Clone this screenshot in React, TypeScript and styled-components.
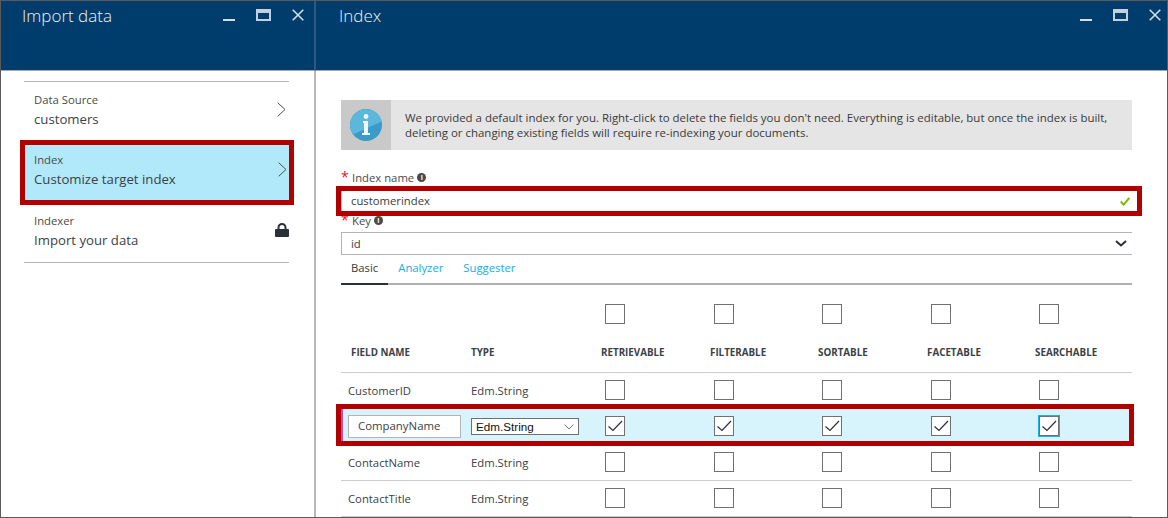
import { createGlobalStyle, styled } from "styled-components";

const GlobalStyle = createGlobalStyle`
  html, body {
    margin: 0;
    padding: 0;
    background: #ffffff;
  }
  * {
    box-sizing: border-box;
  }
`;

const Frame = styled.div`
  display: flex;
  width: 1168px;
  height: 518px;
  overflow: hidden;
  border: 1px solid #5a5a5a;
  font-family: "Open Sans", "Noto Sans", sans-serif;
  color: #3a3a3a;
  background: #ffffff;
`;

const Blade = styled.section<{ $width: string }>`
  display: flex;
  flex-direction: column;
  width: ${(p) => p.$width};
  height: 100%;
`;

const BladeHeader = styled.header<{ $divider?: boolean }>`
  display: flex;
  justify-content: space-between;
  height: 70px;
  flex: none;
  padding: 3px ${(p) => (p.$divider ? "10px" : "6px")} 0 21px;
  background: #003c6c;
  border-bottom: 1px solid #a8a8a8;
  border-right: ${(p) => (p.$divider ? "2px solid #2c5a85" : "none")};
`;

const BladeTitle = styled.h2<{ $indent?: number }>`
  margin: 0 0 0 ${(p) => p.$indent ?? 0}px;
  font-size: 17px;
  font-weight: 300;
  line-height: 24px;
  color: #eef3f7;
`;

const WindowButtons = styled.div`
  display: flex;
  align-items: flex-start;
  gap: 21px;
  padding-top: 5px;
`;

const WindowIcon = styled.svg`
  display: block;
  height: 12px;
  stroke: #d3dee8;
  fill: none;
`;

const Minimize = () => (
  <WindowIcon width="12" viewBox="0 0 12 12">
    <path d="M0 11h12" strokeWidth="2" />
  </WindowIcon>
);

const Maximize = () => (
  <WindowIcon width="15" viewBox="0 0 15 12">
    <path fillRule="evenodd" stroke="none" fill="#c3d1df" d="M0 0h15v12H0zM2 4v6h11V4z" />
  </WindowIcon>
);

const Close = () => (
  <WindowIcon width="12" viewBox="0 0 12 12">
    <path d="M.7.7l10.6 10.6M11.3.7L.7 11.3" strokeWidth="1.6" />
  </WindowIcon>
);

const WindowControls = () => (
  <WindowButtons>
    <Minimize />
    <Maximize />
    <Close />
  </WindowButtons>
);

const StepsPane = styled.div`
  flex: 1;
  padding: 10px 25px 0 23px;
  border-right: 2px solid #b8b8b8;
`;

const StepList = styled.div`
  display: flex;
  flex-direction: column;
  gap: 5px;
  border-top: 1px solid #b4b4b4;
  border-bottom: 1px solid #b4b4b4;
`;

const Step = styled.div<{ $height: number; $top: number; $active?: boolean }>`
  display: flex;
  align-items: flex-start;
  justify-content: space-between;
  height: ${(p) => p.$height}px;
  padding: ${(p) => p.$top}px ${(p) => (p.$active ? "2px 0 9px" : "3px 0 10px")};
  margin: ${(p) => (p.$active ? "0 0 0 1px" : "0")};
  background: ${(p) => (p.$active ? "#b1e9fa" : "transparent")};
  outline: ${(p) => (p.$active ? "5px solid #b00000" : "none")};
`;

const StepText = styled.div`
  display: flex;
  flex-direction: column;
  gap: 2px;
`;

const StepLabel = styled.span`
  font-size: 11.3px;
  line-height: 16px;
  color: #4a4a4a;
`;

const StepValue = styled.span`
  font-size: 13.2px;
  line-height: 18px;
  color: #3a3f48;
`;

const StepIcon = styled.svg<{ $pull?: number }>`
  display: block;
  flex: none;
  margin: 10px -${(p) => p.$pull ?? 0}px 0 0;
`;

const Chevron = () => (
  <StepIcon width="9" height="15" viewBox="0 0 9 15" fill="none" stroke="#4a4f58">
    <path d="M.7.7L8 7.5.7 14.3" />
  </StepIcon>
);

const LockIcon = () => (
  <StepIcon $pull={3} width="14" height="14" viewBox="0 0 14 14">
    <path d="M3.5 7V4.5a3.5 3.5 0 0 1 7 0V7" fill="none" stroke="#2b2f38" strokeWidth="2" />
    <path d="M1 6h12a1 1 0 0 1 1 1v6a1 1 0 0 1-1 1H1a1 1 0 0 1-1-1V7a1 1 0 0 1 1-1z" fill="#2b2f38" />
  </StepIcon>
);

const WorkPane = styled.div`
  flex: 1;
  padding: 29px 35px 0 25px;
`;

const InfoBar = styled.div`
  display: flex;
  align-items: center;
  height: 50px;
  background: #e5e5e5;
`;

const InfoIconBox = styled.div`
  display: flex;
  align-items: center;
  justify-content: center;
  flex: none;
  width: 50px;
  height: 50px;
  background: #c9c9c9;
`;

const InfoText = styled.p`
  margin: 0 0 0 14px;
  font-size: 11.46px;
  line-height: 15px;
  white-space: nowrap;
  color: #3a3a3a;
`;

const FieldLabel = styled.div<{ $top: number; $bottom: number }>`
  display: flex;
  align-items: center;
  gap: 4px;
  height: 16px;
  margin: ${(p) => p.$top}px 0 ${(p) => p.$bottom}px;
  font-size: 11.3px;
  color: #4a4a4a;
`;

const Required = styled.span`
  width: 7px;
  color: #e81123;
  font-size: 14px;
  line-height: 16px;
`;

const Hint = styled.span`
  display: inline-flex;
  align-items: center;
  justify-content: center;
  width: 9px;
  height: 9px;
  margin-left: -1px;
  border-radius: 50%;
  background: #4a4a4a;
  color: #ffffff;
  font-size: 7px;
  font-weight: 700;
  line-height: 9px;
`;

const NameInput = styled.div`
  position: relative;
  z-index: 1;
  display: flex;
  align-items: center;
  justify-content: space-between;
  height: 20px;
  margin: 0 -5px 0 0;
  padding: 0 7px 0 9px;
  border-left: 1px solid #b4b4b4;
  background: #ffffff;
  font-size: 11.3px;
  outline: 5px solid #b00000;
`;

const NameValue = styled.span`
  margin-bottom: 2px;
`;

const KeySelect = styled.div`
  display: flex;
  align-items: center;
  justify-content: space-between;
  height: 23px;
  padding: 0 5px 0 9px;
  border: 1px solid #b4b4b4;
  border-right: none;
  font-size: 11.3px;
`;

const Tabs = styled.div`
  display: flex;
  height: 30px;
  border-bottom: 2px solid #b0b0b0;
`;

const Tab = styled.div<{ $active?: boolean }>`
  height: 30px;
  padding: 5px 10px 0;
  font-size: 11.3px;
  line-height: 16px;
  color: ${(p) => (p.$active ? "#3a3a3a" : "#14aee8")};
  border-bottom: 2px solid ${(p) => (p.$active ? "#2b2f38" : "transparent")};
`;

const CHECK_COLUMNS = "109px 108px 109px 108px 1fr";
const FIELD_COLUMNS = `130px 130px ${CHECK_COLUMNS}`;

const BulkRow = styled.div`
  display: grid;
  grid-template-columns: ${FIELD_COLUMNS};
  padding-top: 19px;
`;

const HeadRow = styled.div`
  display: grid;
  grid-template-columns: ${FIELD_COLUMNS};
  align-items: center;
  height: 49px;
  padding-top: 8px;
  border-bottom: 1px solid #cccccc;
`;

const HeadCell = styled.span<{ $inset?: number }>`
  padding-left: ${(p) => p.$inset ?? 0}px;
  font-size: 9.8px;
  font-weight: 700;
  color: #3a3f48;
`;

const Row = styled.div<{ $height: number; $top: number; $ruled?: boolean }>`
  display: grid;
  grid-template-columns: ${FIELD_COLUMNS};
  align-items: start;
  height: ${(p) => p.$height}px;
  padding-top: ${(p) => p.$top}px;
  border-bottom: ${(p) => (p.$ruled ? "1px solid #cccccc" : "none")};
`;

const SelectedRow = styled(Row)`
  grid-template-columns: 128px 130px ${CHECK_COLUMNS};
  margin: 0 3px 3px 0;
  border-left: 2px solid #c04ac0;
  background: #d7f4fd;
  outline: 5px solid #b00000;
`;

const CellText = styled.span<{ $inset?: number }>`
  padding: 1px 0 0 ${(p) => p.$inset ?? 0}px;
  font-size: 11.3px;
  line-height: 20px;
  color: #3a3f48;
`;

const NameBox = styled.div`
  display: flex;
  align-items: center;
  width: 113px;
  height: 23px;
  margin: -1px 0 0 5px;
  padding: 0 0 2px 9px;
  border: 1px solid #b4b4b4;
  background: #ffffff;
  font-size: 11.4px;
  color: #3a3f48;
`;

const TypeSelect = styled.div`
  display: flex;
  align-items: center;
  justify-content: space-between;
  width: 108px;
  height: 17px;
  margin-top: 2px;
  padding: 0 4px;
  border: 1px solid #707070;
  background: #ffffff;
  font-family: "Liberation Sans", sans-serif;
  font-size: 11.7px;
  color: #111111;
`;

const CheckBox = styled.div<{ $focused?: boolean }>`
  display: flex;
  align-items: center;
  justify-content: center;
  width: 20px;
  height: 20px;
  margin-left: 4px;
  border: 1px solid #707070;
  background: #ffffff;
  box-shadow: ${(p) => (p.$focused ? "0 0 0 1px #1ab0e8" : "none")};
`;

const InfoIcon = () => (
  <svg width="32" height="32" viewBox="0 0 32 32">
    <circle cx="16" cy="16" r="16" fill="#3a9ac8" />
    <path d="M0 16A16 16 0 0 1 31.6 12.6L3.2 25.6A16 16 0 0 1 0 16z" fill="#5cb7dc" />
    <circle cx="16" cy="7.5" r="2.4" fill="#f0f8fb" />
    <path d="M13 12h5v12h2v2h-8v-2h2V14h-1z" fill="#f0f8fb" />
  </svg>
);

const TickIcon = () => (
  <svg width="16" height="12" viewBox="0 0 16 12" fill="none" stroke="#2b2f38" strokeWidth="1.2">
    <path d="M1.5 6.5l4.5 4L15 1" />
  </svg>
);

const ValidIcon = () => (
  <svg width="10" height="9" viewBox="0 0 10 9" fill="none" stroke="#7fba00" strokeWidth="2">
    <path d="M.7 4.5L3.6 7.6 9.3 1" />
  </svg>
);

const KeyChevron = () => (
  <svg width="12" height="7" viewBox="0 0 12 7" fill="none" stroke="#2b2f38" strokeWidth="2">
    <path d="M1 1l5 4.5L11 1" />
  </svg>
);

const TypeChevron = () => (
  <svg width="10" height="6" viewBox="0 0 10 6" fill="none" stroke="#707070" strokeWidth="1">
    <path d="M.5.5L5 5 9.5.5" />
  </svg>
);

const columns = ["RETRIEVABLE", "FILTERABLE", "SORTABLE", "FACETABLE", "SEARCHABLE"];

export default function App() {
  return (
    <>
      <GlobalStyle />
      <Frame>
        <Blade $width="315px">
          <BladeHeader $divider>
            <BladeTitle>Import data</BladeTitle>
            <WindowControls />
          </BladeHeader>
          <StepsPane>
            <StepList>
              <Step $height={58} $top={10}>
                <StepText>
                  <StepLabel>Data Source</StepLabel>
                  <StepValue>customers</StepValue>
                </StepText>
                <Chevron />
              </Step>
              <Step $height={55} $top={7} $active>
                <StepText>
                  <StepLabel>Index</StepLabel>
                  <StepValue>Customize target index</StepValue>
                </StepText>
                <Chevron />
              </Step>
              <Step $height={57} $top={8}>
                <StepText>
                  <StepLabel>Indexer</StepLabel>
                  <StepValue>Import your data</StepValue>
                </StepText>
                <LockIcon />
              </Step>
            </StepList>
          </StepsPane>
        </Blade>
        <Blade $width="851px">
          <BladeHeader>
            <BladeTitle $indent={2}>Index</BladeTitle>
            <WindowControls />
          </BladeHeader>
          <WorkPane>
            <InfoBar>
              <InfoIconBox>
                <InfoIcon />
              </InfoIconBox>
              <InfoText>
                We provided a default index for you. Right-click to delete the fields you don't need. Everything is
                editable, but once the index is built,
                <br />
                deleting or changing existing fields will require re-indexing your documents.
              </InfoText>
            </InfoBar>
            <FieldLabel $top={19} $bottom={6}>
              <Required>*</Required>
              Index name
              <Hint>i</Hint>
            </FieldLabel>
            <NameInput>
              <NameValue>customerindex</NameValue>
              <ValidIcon />
            </NameInput>
            <FieldLabel $top={1} $bottom={4}>
              <Required>*</Required>
              Key
              <Hint>i</Hint>
            </FieldLabel>
            <KeySelect>
              id
              <KeyChevron />
            </KeySelect>
            <Tabs>
              <Tab $active>Basic</Tab>
              <Tab>Analyzer</Tab>
              <Tab>Suggester</Tab>
            </Tabs>
            <BulkRow>
              <span />
              <span />
              {columns.map((c) => (
                <CheckBox key={c} />
              ))}
            </BulkRow>
            <HeadRow>
              <HeadCell $inset={10}>FIELD NAME</HeadCell>
              <HeadCell>TYPE</HeadCell>
              {columns.map((c) => (
                <HeadCell key={c}>{c}</HeadCell>
              ))}
            </HeadRow>
            <Row $height={36} $top={7}>
              <CellText $inset={7}>CustomerID</CellText>
              <CellText>Edm.String</CellText>
              {columns.map((c) => (
                <CheckBox key={c} />
              ))}
            </Row>
            <SelectedRow $height={32} $top={7}>
              <NameBox>CompanyName</NameBox>
              <TypeSelect>
                Edm.String
                <TypeChevron />
              </TypeSelect>
              {columns.map((c) => (
                <CheckBox key={c} $focused={c === "SEARCHABLE"}>
                  <TickIcon />
                </CheckBox>
              ))}
            </SelectedRow>
            <Row $height={37} $top={8} $ruled>
              <CellText $inset={7}>ContactName</CellText>
              <CellText>Edm.String</CellText>
              {columns.map((c) => (
                <CheckBox key={c} />
              ))}
            </Row>
            <Row $height={36} $top={7} $ruled>
              <CellText $inset={7}>ContactTitle</CellText>
              <CellText>Edm.String</CellText>
              {columns.map((c) => (
                <CheckBox key={c} />
              ))}
            </Row>
          </WorkPane>
        </Blade>
      </Frame>
    </>
  );
}
